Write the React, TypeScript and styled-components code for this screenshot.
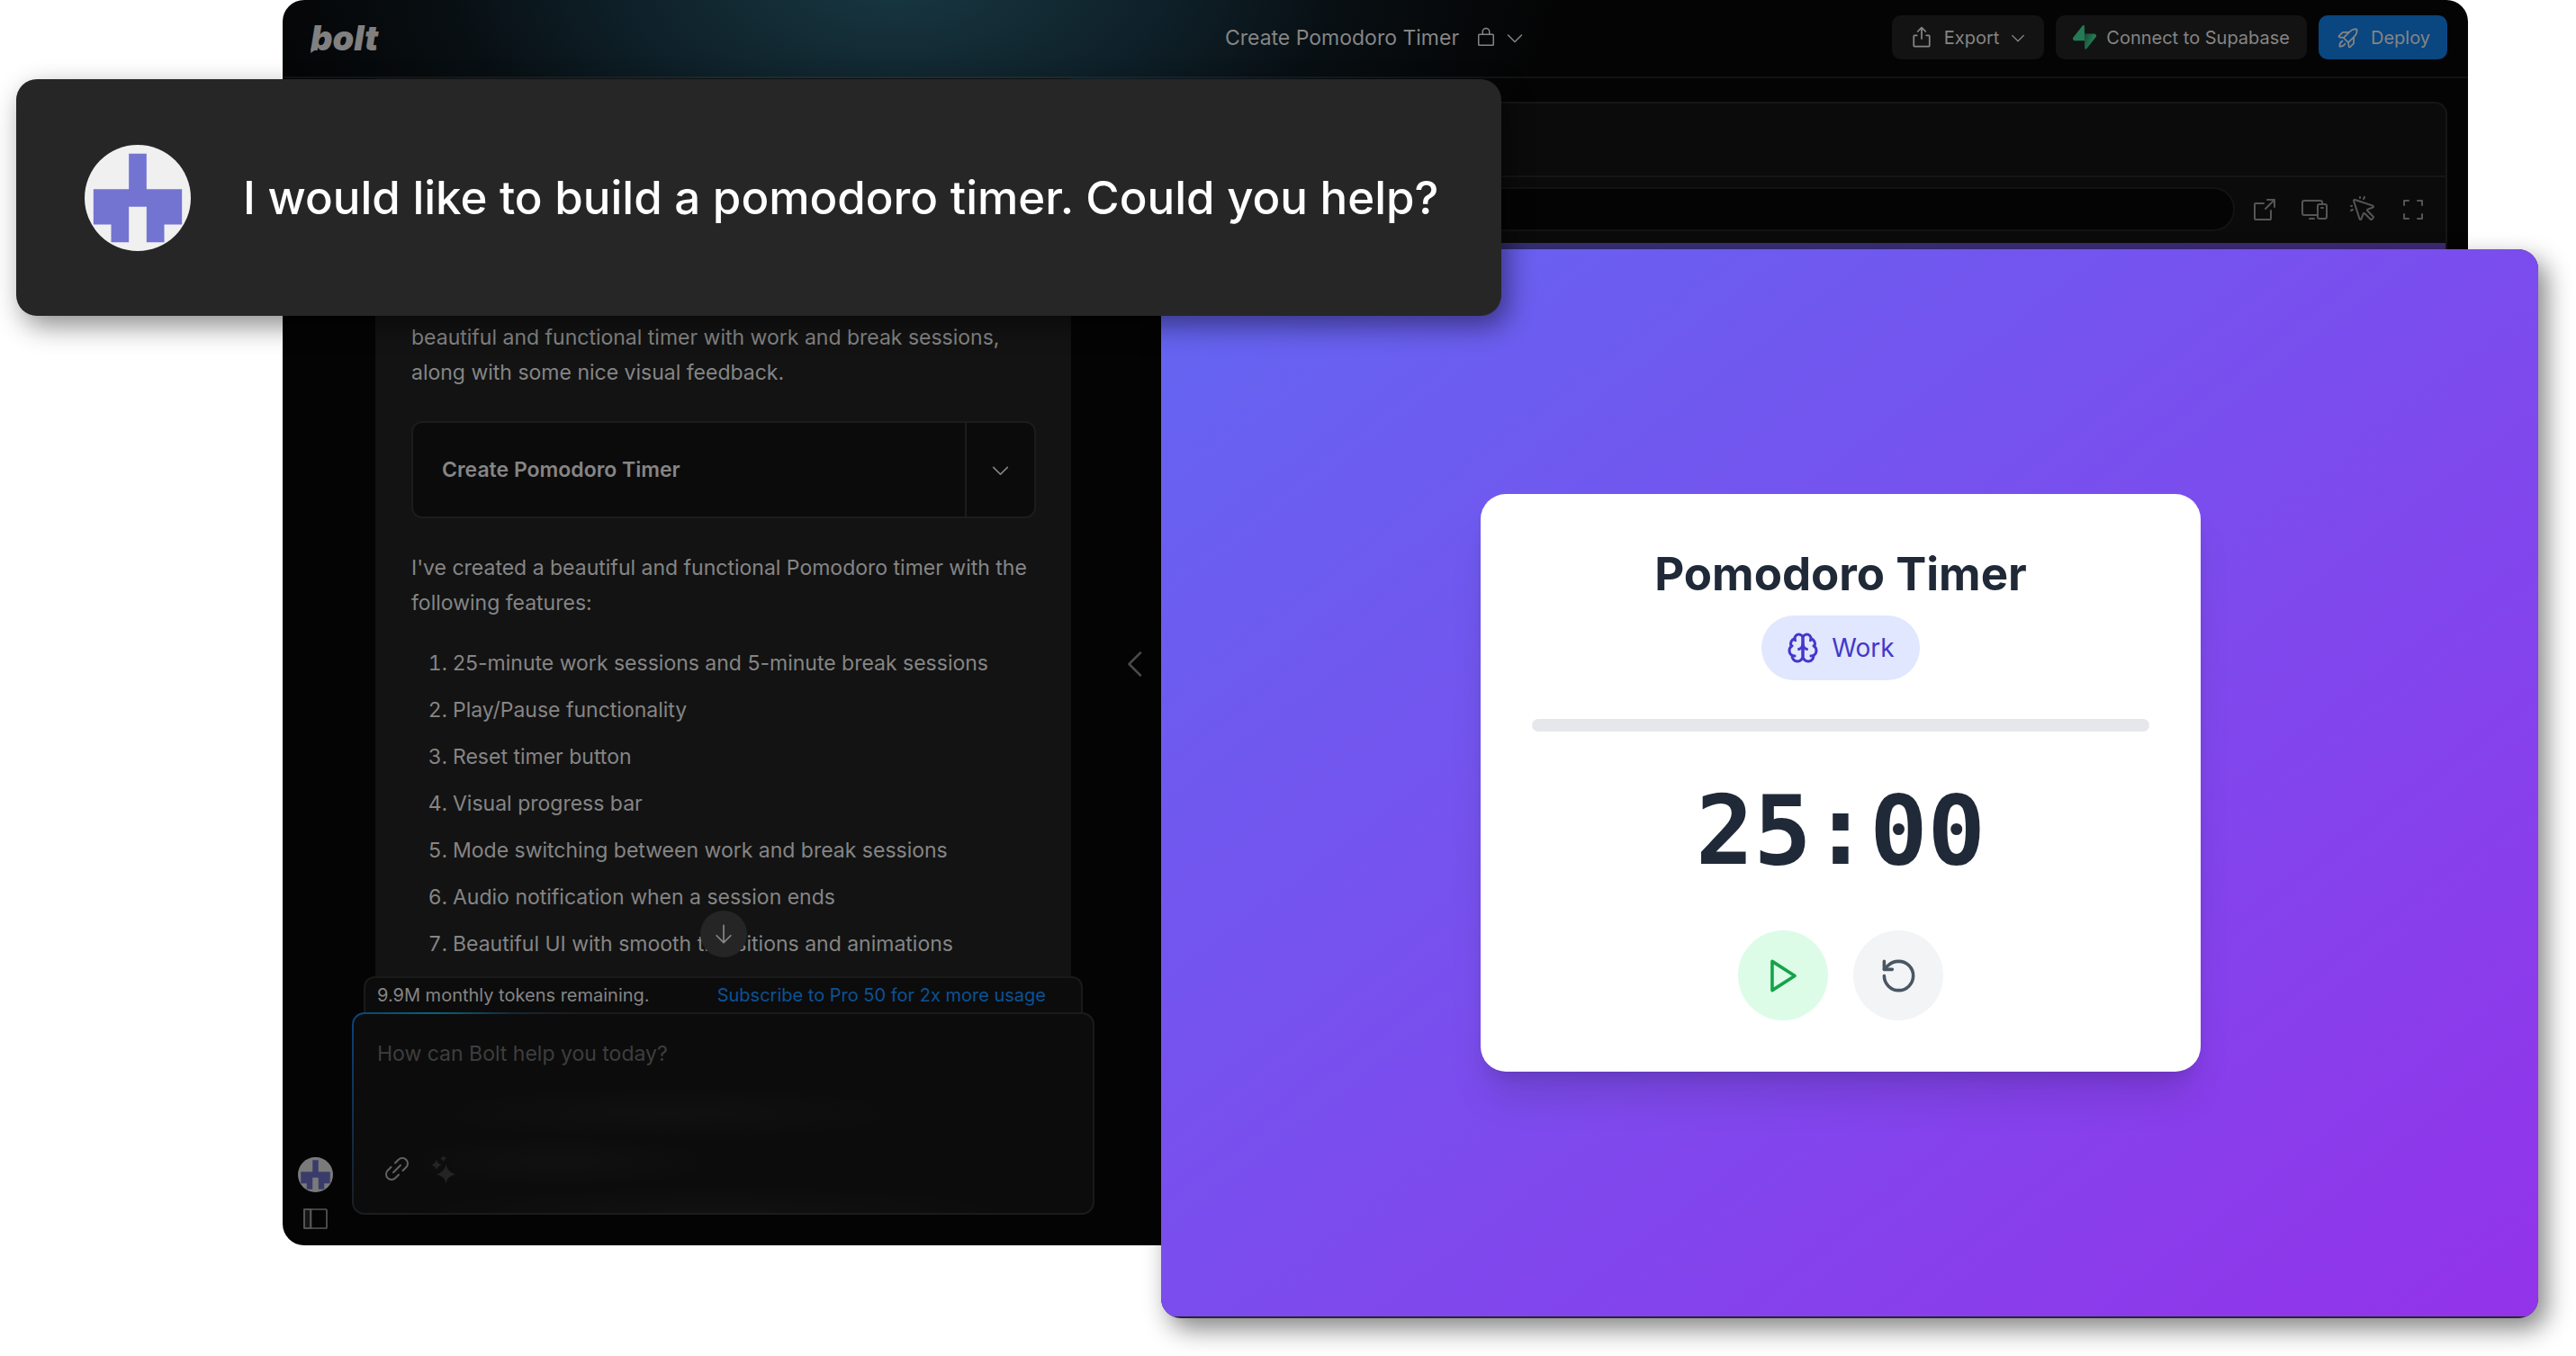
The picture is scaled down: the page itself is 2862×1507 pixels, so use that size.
import React from "react";
import styled, { createGlobalStyle, css } from "styled-components";
import {
  PiArrowDown,
  PiArrowSquareOut,
  PiCaretDown,
  PiCaretLeft,
  PiCornersOut,
  PiCursorClick,
  PiDevices,
  PiExport,
  PiLinkSimple,
  PiLockSimple,
  PiRocketLaunch,
} from "react-icons/pi";

const GlobalStyle = createGlobalStyle`
  *, *::before, *::after { box-sizing: border-box; }
  body {
    margin: 0;
    background: #fff;
    font-family: Inter, "Liberation Sans", sans-serif;
  }
  button, textarea { font: inherit; color: inherit; }
  button { border: 0; padding: 0; background: none; cursor: pointer; }
  svg { display: block; flex: none; }
`;

const Page = styled.main`
  position: relative;
  min-height: 100vh;
`;

/* ---------- editor window ---------- */

const EditorWindow = styled.section`
  display: flex;
  flex-direction: column;
  margin: 0 120px 0 314px;
  overflow: hidden;
  border-radius: 24px;
  color: #858585;
  font-size: 23px;
  background:
    radial-gradient(ellipse 740px 360px at 680px -20px, #183842 0%, #0f222b 38%, rgba(9, 17, 22, 0.8) 68%, rgba(5, 5, 5, 0) 100%),
    #040404;
`;

const Header = styled.header`
  display: grid;
  grid-template-columns: 1fr auto 1fr;
  align-items: center;
  height: 87px;
  padding: 0 23px 2px;
  border-bottom: 2px solid rgba(255, 255, 255, 0.06);
`;

const Logo = styled.a`
  position: relative;
  justify-self: start;
  margin-left: 8px;
  color: #808080;
  font-size: 38px;
  font-style: italic;
  font-weight: 900;
  line-height: 40px;
  text-decoration: none;
`;

const LogoSpur = styled.svg`
  position: absolute;
  left: 0;
  bottom: 3px;
`;

const ProjectTitle = styled.div`
  display: flex;
  align-items: center;
`;

const ProjectButton = styled.button`
  display: flex;
  align-items: center;
  gap: 8px;
  margin-left: 18px;
`;

const HeaderActions = styled.div`
  display: flex;
  justify-self: end;
  gap: 13px;
`;

const HeaderButton = styled.button<{ $primary?: boolean }>`
  display: flex;
  align-items: center;
  gap: 11px;
  height: 49px;
  padding: 0 19px;
  border-radius: 10px;
  font-size: 20px;
  background: ${(p) => (p.$primary ? "#0a4680" : "#131313")};
`;

const Workspace = styled.div`
  display: flex;
`;

const Rail = styled.nav`
  display: flex;
  flex: none;
  flex-direction: column;
  align-items: center;
  justify-content: flex-end;
  gap: 18px;
  width: 77px;
  padding: 0 4px 18px 0;
`;

const RailButton = styled.button<{ $dim?: boolean }>`
  display: flex;
  opacity: ${(p) => (p.$dim ? 0.5 : 1)};
`;

const Chat = styled.section`
  flex: 0 1 825px;
  padding-bottom: 34px;
`;

const Message = styled.article`
  position: relative;
  margin: 0 26px;
  padding: 269px 39px 16px 40px;
  background: #131313;
`;

const Paragraph = styled.p`
  margin: 0;
  line-height: 39px;
`;

const Artifact = styled.div`
  display: flex;
  height: 108px;
  margin: 34px 0 36px;
  border: 2px solid #1c1c1c;
  border-radius: 12px;
  background: #0b0b0b;
`;

const ArtifactTitle = styled.button`
  flex: 1;
  padding: 0 32px;
  font-weight: 600;
  text-align: left;
`;

const ArtifactToggle = styled.button`
  display: grid;
  place-items: center;
  width: 77px;
  border-left: 2px solid #1c1c1c;
`;

const FeatureList = styled.ol`
  display: flex;
  flex-direction: column;
  gap: 12px;
  margin: 27px 0 0;
  padding: 0 0 0 46px;
  line-height: 40px;
`;

const ScrollButton = styled.button`
  position: absolute;
  bottom: 21px;
  left: 50%;
  display: grid;
  place-items: center;
  width: 52px;
  height: 52px;
  margin-left: -26px;
  border-radius: 50%;
  background: #252525;
`;

const TokenBanner = styled.div`
  display: flex;
  align-items: center;
  justify-content: space-between;
  height: 40px;
  margin: 0 13px;
  padding: 0 39px 0 13px;
  border: 2px solid #1a1a1a;
  border-bottom: 0;
  border-radius: 12px 12px 0 0;
  background: #0c0c0c;
  font-size: 20px;
`;

const UpgradeLink = styled.a`
  color: #0b5296;
  text-decoration: none;
`;

const Prompt = styled.form`
  display: flex;
  flex-direction: column;
  height: 225px;
  padding: 26px;
  border: 2px solid transparent;
  border-radius: 14px;
  background:
    radial-gradient(ellipse 280px 30px at 350px 110px, rgba(255, 255, 255, 0.018), transparent) padding-box,
    radial-gradient(ellipse 180px 30px at 230px 164px, rgba(255, 255, 255, 0.018), transparent) padding-box,
    radial-gradient(ellipse 340px 30px at 400px 221px, rgba(255, 255, 255, 0.022), transparent) padding-box,
    linear-gradient(#0c0c0c, #0c0c0c) padding-box,
    radial-gradient(ellipse 90px 60px at 88px 0, #0a6377, transparent) border-box,
    radial-gradient(circle 240px at 10px 0, #0d437c, transparent) border-box,
    linear-gradient(#1b1b1b, #1b1b1b) border-box;
`;

const PromptInput = styled.textarea`
  flex: 1;
  width: 100%;
  padding: 0;
  border: 0;
  outline: 0;
  resize: none;
  background: none;
  line-height: 36px;
  &::placeholder { color: #3e3e3e; opacity: 1; }
`;

const PromptTools = styled.div`
  display: flex;
  align-items: center;
  gap: 22px;
  padding: 0 0 7px 6px;
`;

const ToolButton = styled.button<{ $tone: string }>`
  display: flex;
  color: ${(p) => p.$tone};
`;

const Splitter = styled.div`
  display: flex;
  flex: none;
  justify-content: center;
  width: 92px;
  padding-top: 631px;
`;

const Workbench = styled.section`
  display: flex;
  flex: 1;
  flex-direction: column;
  margin: 26px 23px 26px 0;
  overflow: hidden;
  border: 2px solid #161616;
  border-radius: 14px;
  background: #0b0b0b;
`;

const WorkbenchTabs = styled.div`
  height: 82px;
  border-bottom: 2px solid #161616;
`;

const AddressRow = styled.div`
  display: flex;
  align-items: center;
  gap: 17px;
  height: 73px;
  padding: 0 20px 2px;
`;

const AddressBar = styled.div`
  flex: 1;
  height: 49px;
  border: 2px solid #131313;
  border-radius: 24px;
  background: #040404;
`;

const AddressTools = styled.div`
  display: flex;
  gap: 23px;
`;

const DimmedPreview = styled.div`
  flex: 1;
  background: linear-gradient(to bottom right, #333478, #4a1d76);
`;

/* ---------- floating question ---------- */

const Question = styled.section`
  position: absolute;
  z-index: 2;
  top: 88px;
  left: 18px;
  display: flex;
  align-items: center;
  gap: 58px;
  width: 1650px;
  height: 263px;
  padding: 0 76px;
  border-radius: 23px;
  background: #262626;
  box-shadow: 7px 11px 30px rgba(0, 0, 0, 0.45);
`;

const QuestionText = styled.p`
  margin: 0;
  color: #fff;
  font-size: 51px;
  font-weight: 500;
  line-height: 64px;
  white-space: nowrap;
`;

/* ---------- floating preview ---------- */

const Preview = styled.section`
  position: absolute;
  z-index: 1;
  top: 277px;
  right: 42px;
  bottom: 42px;
  left: 1290px;
  display: flex;
  padding-bottom: 2px;
  overflow: hidden;
  border-radius: 22px;
  background: #27262e;
  box-shadow: 9px 12px 28px rgba(0, 0, 0, 0.48);
`;

const PreviewCanvas = styled.div`
  display: grid;
  flex: 1;
  place-items: center;
  padding-right: 20px;
  background: linear-gradient(to bottom right, #6366f1, #9333ea);
`;

const TimerCard = styled.article`
  display: flex;
  flex-direction: column;
  align-items: center;
  width: 800px;
  max-width: 100%;
  padding: 57px;
  border-radius: 28px;
  background: #fff;
  box-shadow: 0 36px 44px -9px rgba(0, 0, 0, 0.12), 0 14px 18px -10px rgba(0, 0, 0, 0.12);
`;

const TimerTitle = styled.h1`
  margin: 0 0 14px;
  color: #1f2937;
  font-size: 51px;
  font-weight: 700;
  line-height: 64px;
`;

const ModePill = styled.button`
  display: flex;
  align-items: center;
  gap: 14px;
  height: 72px;
  padding: 0 28px;
  border-radius: 36px;
  background: #e0e7ff;
  color: #4338ca;
  font-size: 28px;
`;

const Progress = styled.div`
  width: 100%;
  height: 14px;
  margin: 43px 0 57px;
  border-radius: 7px;
  background: #e5e7eb;
`;

const Clock = styled.time`
  margin-bottom: 57px;
  color: #1f2937;
  font-family: "DejaVu Sans Mono", monospace;
  font-size: 107px;
  font-weight: 700;
  line-height: 107px;
`;

const Controls = styled.div`
  display: flex;
  gap: 28px;
`;

const tones = {
  go: css`background: #dcfce7; color: #16a34a;`,
  neutral: css`background: #f3f4f6; color: #4b5563;`,
};

const RoundButton = styled.button<{ $tone: "go" | "neutral" }>`
  display: grid;
  place-items: center;
  width: 100px;
  height: 100px;
  border-radius: 50%;
  ${(p) => tones[p.$tone]}
`;

/* ---------- drawings ---------- */

const RoundDrawing = styled.svg`
  border-radius: 50%;
`;

const Avatar = ({ size }: { size: number }) => (
  <RoundDrawing width={size} height={size} viewBox="0 0 420 420" aria-hidden="true">
    <rect width="420" height="420" fill="#f0f0f0" />
    <path d="M175 35h70v140h140v140h-70v70h-70V245h-70v140h-70v-70H35V175h140z" fill="#7373d2" />
  </RoundDrawing>
);

const OutlineIcon = ({ size, paths }: { size: number; paths: string[] }) => (
  <svg
    width={size}
    height={size}
    viewBox="0 0 24 24"
    fill="none"
    stroke="currentColor"
    strokeWidth="2"
    strokeLinecap="round"
    strokeLinejoin="round"
    aria-hidden="true"
  >
    {paths.map((d) => (
      <path key={d} d={d} />
    ))}
  </svg>
);

const brain = [
  "M12 5a3 3 0 1 0-5.997.125 4 4 0 0 0-2.526 5.77 4 4 0 0 0 .556 6.588A4 4 0 1 0 12 18Z",
  "M12 5a3 3 0 1 1 5.997.125 4 4 0 0 1 2.526 5.77 4 4 0 0 1-.556 6.588A4 4 0 1 1 12 18Z",
  "M15 13a4.5 4.5 0 0 1-3-4 4.5 4.5 0 0 1-3 4",
  "M17.599 6.5a3 3 0 0 0 .399-1.375",
  "M6.003 5.125A3 3 0 0 0 6.401 6.5",
  "M3.477 10.896a4 4 0 0 1 .585-.396",
  "M19.938 10.5a4 4 0 0 1 .585.396",
  "M6 18a4 4 0 0 1-1.967-.516",
  "M19.967 17.484A4 4 0 0 1 18 18",
];
const play = ["M5 3 19 12 5 21z"];
const reset = ["M3 12a9 9 0 1 0 9-9 9.75 9.75 0 0 0-6.74 2.74L3 8", "M3 3v5h5"];

const SupabaseMark = () => (
  <svg width="26" height="27" viewBox="0 0 109 113" aria-hidden="true">
    <defs>
      <linearGradient id="supabaseBase" x1="54" y1="55" x2="94" y2="72" gradientUnits="userSpaceOnUse">
        <stop stopColor="#164f38" />
        <stop offset="1" stopColor="#257a56" />
      </linearGradient>
    </defs>
    <path
      fill="url(#supabaseBase)"
      d="M63.7 110.3c-2.9 3.6-8.7 1.6-8.7-3L54 40h45.2c8.2 0 12.8 9.5 7.7 15.9z"
    />
    <path
      fill="#257a56"
      d="M45.3 2.1c2.9-3.6 8.7-1.7 8.7 2.9l.5 67.3H9.8c-8.2 0-12.7-9.5-7.6-15.9z"
    />
  </svg>
);

const Sparkles = () => (
  <svg width="28" height="31" viewBox="0 0 28 31" fill="currentColor" aria-hidden="true">
    <path d="M16.5 10q1.5 9 11 11-9.5 2-11 10-1.5-8-11-10 9.5-2 11-11z" />
    <path d="M6 4.5q.9 5 6 6.2-5.1 1.2-6 6-.9-4.8-6-6 5.1-1.2 6-6.200z" />
    <path d="M13.7 0q.6 2.8 3.6 3.5-3 .7-3.6 3.5-.6-2.8-3.6-3.5 3-.7 3.600-3.500z" />
  </svg>
);

const SidebarIcon = () => (
  <svg width="27" height="23" viewBox="0 0 27 23" fill="none" stroke="#565656" strokeWidth="1.7" aria-hidden="true">
    <path d="M1 1h7v21H1z" fill="#161616" />
    <rect x="1" y="1" width="25" height="21" rx="1" />
    <path d="M8.5 1v21" />
  </svg>
);

const features = [
  "25-minute work sessions and 5-minute break sessions",
  "Play/Pause functionality",
  "Reset timer button",
  "Visual progress bar",
  "Mode switching between work and break sessions",
  "Audio notification when a session ends",
  "Beautiful UI with smooth transitions and animations",
];

const EditorHeader = () => (
  <Header>
    <Logo href="#">
      bolt
      <LogoSpur width="7" height="7" viewBox="0 0 7 7" aria-hidden="true">
        <path d="M1 0 0 7l6-4z" fill="#808080" />
      </LogoSpur>
    </Logo>
    <ProjectTitle>
      Create Pomodoro Timer
      <ProjectButton aria-label="Project options">
        <PiLockSimple size={24} />
        <PiCaretDown size={24} />
      </ProjectButton>
    </ProjectTitle>
    <HeaderActions>
      <HeaderButton>
        <PiExport size={28} />
        Export
        <PiCaretDown size={20} />
      </HeaderButton>
      <HeaderButton>
        <SupabaseMark />
        Connect to Supabase
      </HeaderButton>
      <HeaderButton $primary>
        <PiRocketLaunch size={28} />
        Deploy
      </HeaderButton>
    </HeaderActions>
  </Header>
);

const ChatPanel = () => (
  <Chat>
    <Message>
      <Paragraph>
        beautiful and functional timer with work and break sessions,
        <br />
        along with some nice visual feedback.
      </Paragraph>
      <Artifact>
        <ArtifactTitle>Create Pomodoro Timer</ArtifactTitle>
        <ArtifactToggle aria-label="Show steps">
          <PiCaretDown size={25} />
        </ArtifactToggle>
      </Artifact>
      <Paragraph>
        I've created a beautiful and functional Pomodoro timer with the
        <br />
        following features:
      </Paragraph>
      <FeatureList>
        {features.map((feature) => (
          <li key={feature}>{feature}</li>
        ))}
      </FeatureList>
      <ScrollButton aria-label="Scroll to bottom">
        <PiArrowDown size={28} />
      </ScrollButton>
    </Message>
    <TokenBanner>
      <span>9.9M monthly tokens remaining.</span>
      <UpgradeLink href="#">Subscribe to Pro 50 for 2x more usage</UpgradeLink>
    </TokenBanner>
    <Prompt>
      <PromptInput aria-label="Prompt" placeholder="How can Bolt help you today?" />
      <PromptTools>
        <ToolButton type="button" $tone="#626262" aria-label="Attach file">
          <PiLinkSimple size={32} />
        </ToolButton>
        <ToolButton type="button" $tone="#242424" aria-label="Enhance prompt">
          <Sparkles />
        </ToolButton>
      </PromptTools>
    </Prompt>
  </Chat>
);

const WorkbenchPanel = () => (
  <Workbench>
    <WorkbenchTabs />
    <AddressRow>
      <AddressBar />
      <AddressTools>
        <ToolButton $tone="#555" aria-label="Open in new tab">
          <PiArrowSquareOut size={32} />
        </ToolButton>
        <ToolButton $tone="#555" aria-label="Device size">
          <PiDevices size={32} />
        </ToolButton>
        <ToolButton $tone="#555" aria-label="Select element">
          <PiCursorClick size={32} />
        </ToolButton>
        <ToolButton $tone="#555" aria-label="Full screen">
          <PiCornersOut size={32} />
        </ToolButton>
      </AddressTools>
    </AddressRow>
    <DimmedPreview />
  </Workbench>
);

const Timer = () => (
  <TimerCard>
    <TimerTitle>Pomodoro Timer</TimerTitle>
    <ModePill>
      <OutlineIcon size={36} paths={brain} />
      Work
    </ModePill>
    <Progress role="progressbar" aria-label="Session progress" aria-valuenow={0} />
    <Clock>25:00</Clock>
    <Controls>
      <RoundButton $tone="go" aria-label="Start">
        <OutlineIcon size={43} paths={play} />
      </RoundButton>
      <RoundButton $tone="neutral" aria-label="Reset">
        <OutlineIcon size={43} paths={reset} />
      </RoundButton>
    </Controls>
  </TimerCard>
);

export default function App() {
  return (
    <Page>
      <GlobalStyle />
      <EditorWindow>
        <EditorHeader />
        <Workspace>
          <Rail>
            <RailButton $dim aria-label="Account">
              <Avatar size={39} />
            </RailButton>
            <RailButton aria-label="Toggle sidebar">
              <SidebarIcon />
            </RailButton>
          </Rail>
          <ChatPanel />
          <Splitter>
            <ToolButton $tone="#4a4a4a" aria-label="Collapse chat">
              <PiCaretLeft size={40} />
            </ToolButton>
          </Splitter>
          <WorkbenchPanel />
        </Workspace>
      </EditorWindow>
      <Preview>
        <PreviewCanvas>
          <Timer />
        </PreviewCanvas>
      </Preview>
      <Question>
        <Avatar size={118} />
        <QuestionText>I would like to build a pomodoro timer. Could you help?</QuestionText>
      </Question>
    </Page>
  );
}
